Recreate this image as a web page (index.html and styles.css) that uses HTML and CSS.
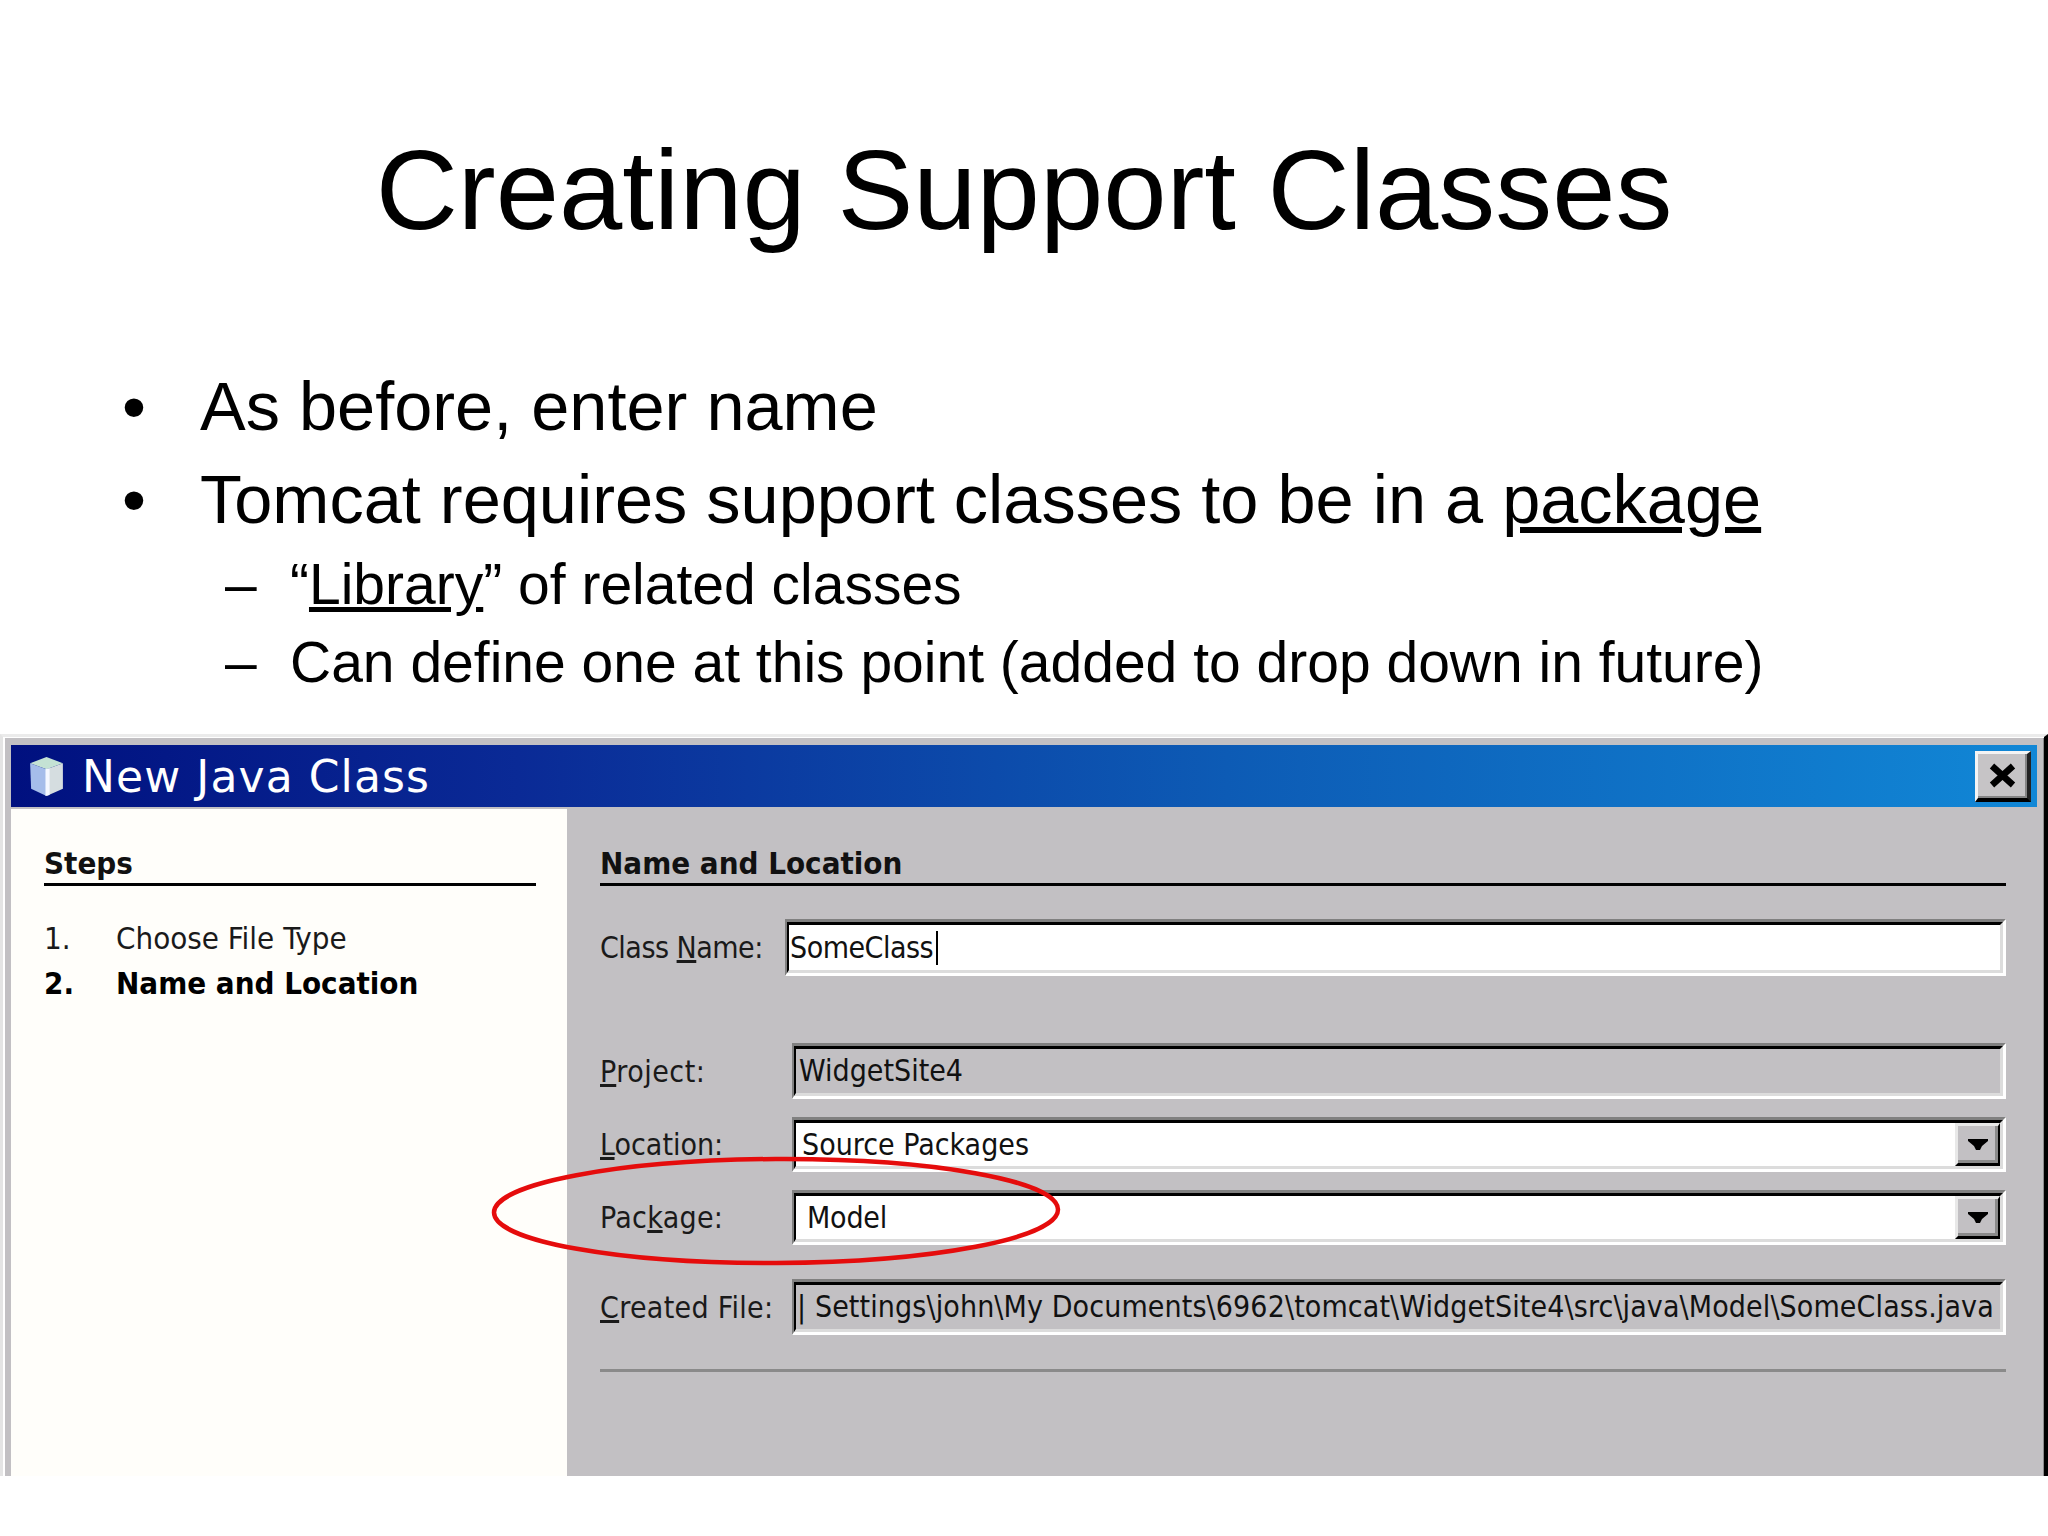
FILE: index.html
```html
<!DOCTYPE html>
<html lang="en">
<head>
<meta charset="utf-8">
<title>Creating Support Classes</title>
<link rel="stylesheet" href="styles.css">
</head>
<body>
<main class="slide">
  <h1 class="slide-title">Creating Support Classes</h1>
  <ul class="points">
    <li class="point"><span class="point-mark">•</span><span>As before, enter name</span></li>
    <li class="point"><span class="point-mark">•</span><span>Tomcat requires support classes to be in a <u>package</u></span></li>
    <li class="subpoint"><span class="subpoint-mark">–</span><span>“<u>Library</u>” of related classes</span></li>
    <li class="subpoint"><span class="subpoint-mark">–</span><span>Can define one at this point (added to drop down in future)</span></li>
  </ul>
  <section class="dialog">
    <div class="frame">
      <header class="titlebar">
        <svg class="cube" viewBox="0 0 40 40" aria-hidden="true">
          <polygon points="20,1 36,7 20,13 4,7" fill="#c4e2d4"/>
          <polygon points="4,7 20,13 20,39 5,32" fill="#a5bdea"/>
          <polygon points="20,13 36,7 36,32 20,39" fill="#d5dde0"/>
          <polygon points="19,13 23,12 23,38 19,39" fill="#f4f8ff"/>
        </svg>
        <span class="titlebar-text">New Java Class</span>
        <button class="close" type="button" aria-label="Close">
          <svg viewBox="0 0 27 25" aria-hidden="true"><path d="M3 3 L24 22 M24 3 L3 22" stroke="#000" stroke-width="6.5" fill="none"/></svg>
        </button>
      </header>
      <div class="panes">
        <aside class="steps">
          <h2 class="pane-heading">Steps</h2>
          <ol class="step-list">
            <li class="step"><span class="step-num">1.</span><span>Choose File Type</span></li>
            <li class="step step-current"><span class="step-num">2.</span><span>Name and Location</span></li>
          </ol>
        </aside>
        <div class="form">
          <h2 class="pane-heading">Name and Location</h2>
          <div class="row row-name">
            <label class="label label-name">Class <u>N</u>ame:</label>
            <div class="field"><div class="well well-white text-name">SomeClass<span class="caret"></span></div></div>
          </div>
          <div class="row row-project">
            <label class="label label-project"><u>P</u>roject:</label>
            <div class="field"><div class="well text-project">WidgetSite4</div></div>
          </div>
          <div class="row row-location">
            <label class="label"><u>L</u>ocation:</label>
            <div class="field"><div class="well well-white">
              <span class="combo-text text-location">Source Packages</span>
              <span class="combo-btn"><svg viewBox="0 0 20 12" aria-hidden="true"><path d="M0 0 H20 V2 L14 7 L12 11 H8 L6 7 L0 2 Z" fill="#000"/></svg></span>
            </div></div>
          </div>
          <div class="row row-package">
            <label class="label label-package">Pac<u>k</u>age:</label>
            <div class="field"><div class="well well-white">
              <span class="combo-text text-package">Model</span>
              <span class="combo-btn"><svg viewBox="0 0 20 12" aria-hidden="true"><path d="M0 0 H20 V2 L14 7 L12 11 H8 L6 7 L0 2 Z" fill="#000"/></svg></span>
            </div></div>
          </div>
          <div class="row row-created">
            <label class="label label-created"><u>C</u>reated File:</label>
            <div class="field"><div class="well text-created">| Settings\john\My Documents\6962\tomcat\WidgetSite4\src\java\Model\SomeClass.java</div></div>
          </div>
          <hr class="divider">
        </div>
      </div>
    </div>
    <svg class="ring" viewBox="0 0 572 113" aria-hidden="true"><ellipse cx="286" cy="55" rx="282" ry="52" transform="rotate(-0.3 286 55)" fill="none" stroke="#e50c0c" stroke-width="4.5"/></svg>
  </section>
</main>
</body>
</html>
```

FILE: styles.css
```css
* { box-sizing: border-box; }
html, body { margin: 0; padding: 0; background: #fff; }
.slide { width: 2048px; height: 1536px; overflow: hidden; font-family: "Liberation Sans", Arial, sans-serif; color: #000; padding-top: 125px; }
.slide-title { margin: 0; font-size: 113.8px; font-weight: 400; line-height: 130px; text-align: center; }

.points { list-style: none; margin: 106px 0 33px; padding: 0; }
.point { display: flex; height: 92.5px; line-height: 92.5px; font-size: 68.5px; padding-left: 122px; }
.point-mark { width: 78px; flex: none; }
.subpoint { display: flex; height: 78px; line-height: 78px; font-size: 57px; padding-left: 225px; }
.point + .subpoint { margin-top: -1px; }
.subpoint-mark { width: 65px; flex: none; }

.dialog { position: relative; height: 742px; border-top: 3px solid #ebebeb; border-left: 3px solid #e4e4e4; border-right: 4px solid #000; padding: 1px 0 0 2px; background: #fff; font-family: "DejaVu Sans Condensed", "DejaVu Sans", sans-serif; color: #111; }
.frame { height: 100%; display: flex; flex-direction: column; background: #c2c0c3; padding: 7px 6px 0; border-right: 1px solid #8a8a8a; }

.titlebar { height: 62px; flex: none; display: flex; align-items: center; padding: 0 6px 0 15px; background: linear-gradient(90deg, #00107f 0%, #0a2a96 25%, #0d5bb5 60%, #1187d6 100%); color: #fff; }
.cube { width: 41px; height: 41px; flex: none; }
.titlebar-text { margin-left: 15px; font-family: "DejaVu Sans", sans-serif; font-size: 44px; letter-spacing: 1.1px; }
.close { margin-left: auto; width: 56px; height: 51px; padding: 0; display: flex; align-items: center; justify-content: center; background: #c6c4c6; border-style: solid; border-width: 3px 4px 4px 3px; border-color: #f4f4f4 #222 #000 #f4f4f4; box-shadow: inset -2px -2px 0 #858585; }
.close svg { width: 27px; height: 25px; }

.panes { flex: 1; display: flex; margin-top: 2px; min-height: 0; }
.steps { width: 556px; flex: none; background: #fffefa; padding: 0 31px 0 33px; }
.form { flex: 1; padding: 0 31px 0 33px; }
.pane-heading { margin: 0; height: 77px; padding-top: 36px; font-size: 31px; line-height: 36px; font-weight: 700; border-bottom: 3px solid #000; }

.step-list { list-style: none; margin: 30px 0 0; padding: 0; }
.step { display: flex; height: 45px; line-height: 45px; font-size: 31px; color: #1a1a1a; }
.step-num { width: 72px; flex: none; }
.step-current { font-weight: 700; color: #000; }

.row { display: flex; align-items: center; height: 55px; font-size: 30px; }
.row-name { margin-top: 33px; height: 57px; }
.row-project { margin-top: 67px; height: 56px; }
.row-location, .row-package { margin-top: 18px; }
.row-created { margin-top: 34px; height: 56px; }
.label { width: 192px; flex: none; color: #1a1a1a; white-space: nowrap; }
.label-name { width: 185px; letter-spacing: -0.5px; }
.label-project { letter-spacing: 0.5px; }
.label-package { letter-spacing: 0.3px; }
.label-created { letter-spacing: 0.3px; }

.field { flex: 1; min-width: 0; height: 100%; border-style: solid; border-width: 3px 3px 3px 2px; border-color: #808080 #fff #fff #808080; }
.well { height: 100%; border-style: solid; border-width: 3px 3px 3px 2px; border-color: #000 #dcdcdc #dcdcdc #000; display: flex; align-items: center; white-space: nowrap; overflow: hidden; line-height: 40px; }
.well-white { background: #fff; }

.text-name { padding-left: 1px; letter-spacing: -0.5px; }
.text-project { padding-left: 3px; }
.text-created { padding-left: 1px; letter-spacing: 0.11px; }
.caret { display: inline-block; width: 2px; height: 34px; margin-left: 3px; background: #000; }

.combo-text { flex: 1; }
.text-location { padding-left: 6px; }
.text-package { padding-left: 11px; letter-spacing: -0.2px; }
.combo-btn { width: 45px; height: 100%; flex: none; display: flex; align-items: center; justify-content: center; background: #c2c0c3; border-style: solid; border-width: 3px 2px 3px 3px; border-color: #e8e8e8 #000 #000 #e8e8e8; box-shadow: inset -3px -3px 0 #8a8a8a; }
.combo-btn svg { width: 20px; height: 12px; }

.divider { margin: 34px 0 0; height: 3px; border: 0; background: #8a8a8a; }

.ring { position: absolute; left: 487px; top: 419px; width: 572px; height: 113px; }
```
